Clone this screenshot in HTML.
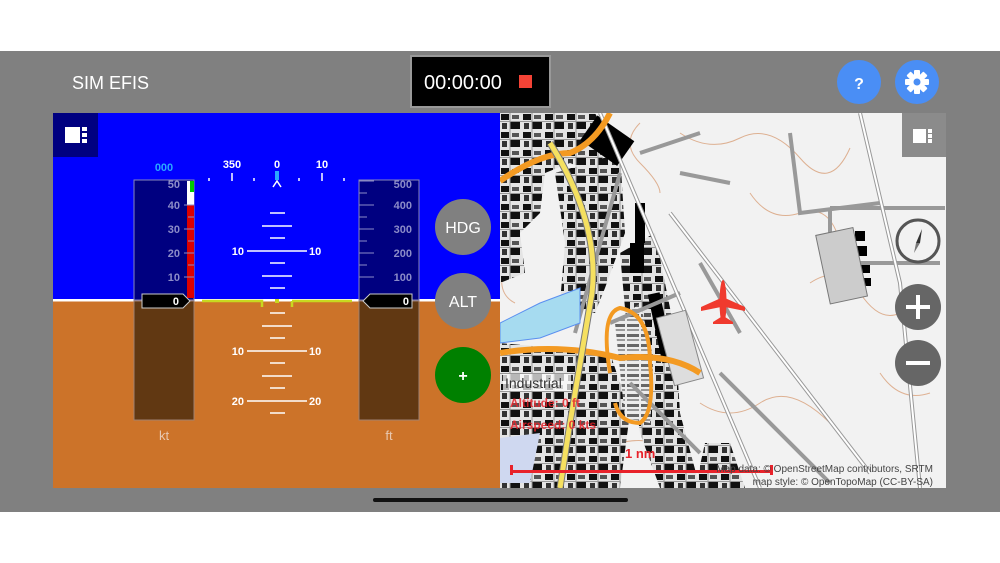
<!DOCTYPE html>
<html><head><meta charset="utf-8"><style>
html,body{margin:0;padding:0;width:1000px;height:563px;overflow:hidden;background:#fff;font-family:"Liberation Sans",sans-serif}
</style></head><body>
<svg width="1000" height="563" xmlns="http://www.w3.org/2000/svg" font-family="Liberation Sans, sans-serif">
<defs>
<pattern id="city" width="22" height="18" patternUnits="userSpaceOnUse">
<rect width="22" height="18" fill="#e4e4e4"/>
<rect x="1" y="1" width="8" height="6" fill="#111"/><rect x="12" y="2" width="7" height="4" fill="#555"/>
<rect x="2" y="10" width="5" height="6" fill="#333"/><rect x="10" y="9" width="10" height="7" fill="#111"/>
<path d="M0 8.5 H22 M10 0 V18" stroke="#999" stroke-width="1"/>
</pattern>
<pattern id="park" width="14" height="10" patternUnits="userSpaceOnUse">
<rect width="14" height="10" fill="#ececec"/><rect x="1" y="1" width="12" height="3" fill="#666"/><rect x="1" y="6" width="12" height="2" fill="#999"/>
</pattern>
</defs>
<rect x="0" y="51" width="1000" height="461" fill="#808080"/>
<text x="72" y="89" font-size="18" fill="#fff">SIM EFIS</text>
<rect x="411" y="56" width="139" height="51" fill="#000" stroke="#999" stroke-width="2"/>
<text x="424" y="89" font-size="20" fill="#fff">00:00:00</text>
<rect x="519" y="75" width="13" height="13" fill="#f44336"/>
<circle cx="859" cy="82" r="22" fill="#4a8ef5"/>
<text x="859" y="89" font-size="16" font-weight="bold" fill="#fff" text-anchor="middle">?</text>
<circle cx="917" cy="82" r="22" fill="#4a8ef5"/>
<g transform="translate(917,82)" fill="#fff">
<circle r="8"/>
<g><rect x="-3" y="-12" width="6" height="24" rx="1"/><rect x="-3" y="-12" width="6" height="24" rx="1" transform="rotate(45)"/><rect x="-3" y="-12" width="6" height="24" rx="1" transform="rotate(90)"/><rect x="-3" y="-12" width="6" height="24" rx="1" transform="rotate(135)"/></g>
<circle r="3.5" fill="#4a8ef5"/>
</g>
<!-- EFIS -->
<rect x="53" y="113" width="447" height="188" fill="#0000ff"/>
<rect x="53" y="300" width="447" height="188" fill="#cc7329"/>
<rect x="53" y="299" width="447" height="2.5" fill="#fff"/>
<rect x="53" y="113" width="45" height="44" fill="#000080"/>
<rect x="65" y="127" width="15" height="16" fill="#fff"/><rect x="82" y="127" width="5" height="4" fill="#fff"/><rect x="82" y="133" width="5" height="4" fill="#fff"/><rect x="82" y="139" width="5" height="4" fill="#fff"/>
<text x="164" y="171" font-size="11" font-weight="bold" fill="#2aa8ff" text-anchor="middle">000</text>
<g fill="#fff" font-size="11" font-weight="bold" text-anchor="middle">
<text x="232" y="168">350</text><text x="277" y="168">0</text><text x="322" y="168">10</text>
</g>
<g stroke="#fff" stroke-width="1.5">
<line x1="209" y1="178" x2="209" y2="181"/><line x1="232" y1="173" x2="232" y2="181"/><line x1="254" y1="178" x2="254" y2="181"/><line x1="299" y1="178" x2="299" y2="181"/><line x1="322" y1="173" x2="322" y2="181"/><line x1="344" y1="178" x2="344" y2="181"/>
<polyline points="273,187 277,181 281,187" fill="none"/>
</g>
<rect x="275" y="171" width="4" height="9" fill="#2aa8ff"/>
<rect x="134" y="180" width="60" height="120" fill="#000080" stroke="#8888bb" stroke-width="1"/>
<rect x="134" y="301" width="60" height="119" fill="#613812" stroke="#a08070" stroke-width="1"/>
<rect x="187" y="181" width="7" height="24" fill="#fff"/>
<rect x="190" y="181" width="4" height="11" fill="#0c0"/>
<rect x="187" y="205" width="7" height="93" fill="#d00"/>
<g fill="#8c8cc8" font-size="11" font-weight="bold" text-anchor="end">
<text x="180" y="188">50</text><text x="180" y="209">40</text><text x="180" y="233">30</text><text x="180" y="257">20</text><text x="180" y="281">10</text></g>
<g stroke="#8c8cc8" stroke-width="1"><line x1="184" y1="205" x2="194" y2="205"/><line x1="184" y1="229" x2="194" y2="229"/><line x1="184" y1="253" x2="194" y2="253"/><line x1="184" y1="277" x2="194" y2="277"/><line x1="188" y1="217" x2="194" y2="217"/><line x1="188" y1="241" x2="194" y2="241"/><line x1="188" y1="265" x2="194" y2="265"/></g>
<polygon points="142,294 183,294 190,301 183,308 142,308" fill="#000" stroke="#ccc" stroke-width="1"/>
<text x="179" y="305" font-size="11" font-weight="bold" fill="#fff" text-anchor="end">0</text>
<text x="164" y="440" font-size="13" fill="#e8c8b0" text-anchor="middle">kt</text>
<rect x="359" y="180" width="60" height="120" fill="#000080" stroke="#8888bb" stroke-width="1"/>
<rect x="359" y="301" width="60" height="119" fill="#613812" stroke="#a08070" stroke-width="1"/>
<g fill="#8c8cc8" font-size="11" font-weight="bold" text-anchor="end">
<text x="412" y="188">500</text><text x="412" y="209">400</text><text x="412" y="233">300</text><text x="412" y="257">200</text><text x="412" y="281">100</text></g>
<g stroke="#8c8cc8" stroke-width="1"><line x1="359" y1="205" x2="374" y2="205"/><line x1="359" y1="229" x2="374" y2="229"/><line x1="359" y1="253" x2="374" y2="253"/><line x1="359" y1="277" x2="374" y2="277"/><line x1="359" y1="193" x2="367" y2="193"/><line x1="359" y1="217" x2="367" y2="217"/><line x1="359" y1="241" x2="367" y2="241"/><line x1="359" y1="265" x2="367" y2="265"/><line x1="359" y1="181" x2="374" y2="181"/></g>
<polygon points="363,301 370,294 412,294 412,308 370,308" fill="#000" stroke="#ccc" stroke-width="1"/>
<text x="409" y="305" font-size="11" font-weight="bold" fill="#fff" text-anchor="end">0</text>
<text x="389" y="440" font-size="13" fill="#e8c8b0" text-anchor="middle">ft</text>
<g stroke="#fff" stroke-width="1.5">
<line x1="270" y1="213" x2="285" y2="213"/><line x1="262" y1="226" x2="292" y2="226"/><line x1="270" y1="238" x2="285" y2="238"/><line x1="247" y1="251" x2="307" y2="251"/><line x1="270" y1="263" x2="285" y2="263"/><line x1="262" y1="276" x2="292" y2="276"/><line x1="270" y1="288" x2="285" y2="288"/>
<line x1="270" y1="313" x2="285" y2="313"/><line x1="262" y1="326" x2="292" y2="326"/><line x1="270" y1="338" x2="285" y2="338"/><line x1="247" y1="351" x2="307" y2="351"/><line x1="270" y1="363" x2="285" y2="363"/><line x1="262" y1="376" x2="292" y2="376"/><line x1="270" y1="388" x2="285" y2="388"/><line x1="247" y1="401" x2="307" y2="401"/><line x1="270" y1="413" x2="285" y2="413"/>
</g>
<g fill="#fff" font-size="11" font-weight="bold">
<text x="244" y="255" text-anchor="end">10</text><text x="309" y="255">10</text>
<text x="244" y="355" text-anchor="end">10</text><text x="309" y="355">10</text>
<text x="244" y="405" text-anchor="end">20</text><text x="309" y="405">20</text>
</g>
<g stroke="#c8d820" stroke-width="2.5" fill="none">
<polyline points="202,301 262,301 262,307"/><polyline points="292,301 352,301"/><polyline points="292,301 292,307"/>
</g>
<rect x="275" y="299" width="4" height="4" fill="#c8d820"/>
<circle cx="463" cy="227" r="28" fill="#808080"/><text x="463" y="233" font-size="16" fill="#fff" text-anchor="middle">HDG</text>
<circle cx="463" cy="301" r="28" fill="#808080"/><text x="463" y="307" font-size="16" fill="#fff" text-anchor="middle">ALT</text>
<circle cx="463" cy="375" r="28" fill="#008000"/><text x="463" y="381" font-size="16" font-weight="bold" fill="#fff" text-anchor="middle">+</text>
<!-- map -->
<svg x="500" y="113" width="446" height="375" viewBox="0 0 446 375">
<rect width="446" height="375" fill="#f2f2f2"/>
<g fill="none" stroke="#d9a07a" stroke-width="1" opacity="0.8">
<path d="M180 20 q30 20 60 5 t60 20 t50 -10"/><path d="M250 80 q20 30 50 20 t40 30"/><path d="M310 170 q30 -20 50 10 t40 20"/><path d="M200 290 q30 20 60 0 t70 20"/><path d="M380 260 q20 30 50 20"/><path d="M120 330 q40 -10 60 20"/><path d="M5 150 q-10 30 10 40"/><path d="M140 10 q-20 20 0 40 t20 30"/>
</g>
<!-- dense city -->
<path d="M0 0 L95 0 L110 30 L95 60 L70 50 L45 60 L40 100 L20 120 L0 120Z" fill="url(#city)"/>
<path d="M55 60 L120 40 L125 120 L105 175 L95 200 L60 190 L65 130Z" fill="url(#city)"/>
<path d="M0 120 L20 120 L25 160 L0 170Z" fill="url(#city)"/>
<path d="M0 230 L110 240 L130 300 L120 375 L0 375Z" fill="url(#city)"/>
<path d="M120 140 L155 120 L175 220 L180 300 L200 375 L160 375 L140 320 L130 250Z" fill="url(#city)"/>
<path d="M115 210 L140 190 L155 250 L150 310 L125 305 Z" fill="url(#park)"/>
<path d="M195 375 L205 330 L230 330 L245 375Z" fill="url(#city)"/>
<g fill="#000">
<rect x="85" y="8" width="45" height="30" transform="rotate(35 100 25)"/>
<rect x="135" y="90" width="10" height="40"/><rect x="130" y="130" width="14" height="30"/><rect x="155" y="180" width="12" height="70" transform="rotate(-12 160 215)"/>
<rect x="355" y="118" width="10" height="10"/><rect x="357" y="133" width="10" height="10"/><rect x="360" y="150" width="10" height="10"/><rect x="362" y="165" width="9" height="8"/>
</g>
<g fill="none" stroke="#999" stroke-width="4">
<path d="M100 0 L260 375"/><path d="M170 100 L370 360"/><path d="M120 60 L75 220"/><path d="M220 260 L330 370"/><path d="M130 270 L200 340"/>
<path d="M330 95 L445 95 M330 95 L330 150 L440 150"/><path d="M360 0 L400 170 L420 375"/><path d="M200 150 L240 220"/><path d="M140 40 L200 20 M180 60 L230 70"/><path d="M110 210 L180 180"/><path d="M290 20 L300 100 L380 90"/>
</g>
<g fill="none" stroke="#fff" stroke-width="2">
<path d="M100 0 L260 375"/><path d="M170 100 L370 360"/><path d="M360 0 L400 170 L420 375"/>
</g>
<rect x="322" y="118" width="38" height="70" fill="#ccc" stroke="#777" transform="rotate(-12 340 150)"/>
<rect x="165" y="200" width="30" height="70" fill="#ddd" stroke="#888" transform="rotate(-15 180 235)"/>
<path d="M0 68 Q40 40 70 40 Q95 30 110 0" stroke="#f39a22" stroke-width="6" fill="none"/>
<path d="M0 240 Q60 230 120 245 Q170 240 200 260" stroke="#f39a22" stroke-width="6" fill="none"/>
<path d="M110 260 Q100 200 120 195 Q150 200 150 250 Q155 300 140 310 Q120 310 115 290" stroke="#f39a22" stroke-width="4" fill="none"/>
<path d="M50 30 Q100 110 92 180 Q80 250 70 310 L60 375" stroke="#777" stroke-width="7" fill="none"/>
<path d="M50 30 Q100 110 92 180 Q80 250 70 310 L60 375" stroke="#f5e060" stroke-width="5" fill="none"/>
<path d="M0 210 L40 190 L80 175 L80 210 L40 225 L0 230Z" fill="#a6dbf0" stroke="#5a8ff0"/>
<path d="M0 325 L40 320 L30 370 L0 370Z" fill="#cfd8f0"/>
<rect x="3" y="261" width="68" height="17" fill="#fff" opacity="0.7"/>
<text x="5" y="275" font-size="14" fill="#333">Industrial</text>
<text x="10" y="294" font-size="12" fill="#e8222a" font-weight="bold" opacity="0.85">Altitude: 0 ft</text>
<text x="10" y="316" font-size="12" fill="#e8222a" font-weight="bold" opacity="0.85">Airspeed: 0 kts</text>
<text x="125" y="345" font-size="13" fill="#e8222a" font-weight="bold">1 nm</text>
<rect x="10" y="357" width="263" height="3" fill="#e8222a"/>
<rect x="10" y="352" width="3" height="10" fill="#e8222a"/><rect x="270" y="352" width="3" height="10" fill="#e8222a"/>
<text x="433" y="359" font-size="10" fill="#444" text-anchor="end">Map data: © OpenStreetMap contributors, SRTM</text>
<text x="433" y="372" font-size="10" fill="#444" text-anchor="end">map style: © OpenTopoMap (CC-BY-SA)</text>
<g transform="translate(223,189)" fill="#f03a2e">
<ellipse cx="0" cy="0" rx="3.5" ry="22"/>
<polygon points="-2,-4 -22,5 -22,9 -2,5 2,5 22,9 22,5 2,-4"/>
<polygon points="-2,15 -10,20 -10,22 10,22 10,20 2,15"/>
</g>
<rect x="402" y="0" width="44" height="44" fill="#808080" opacity="0.9"/>
<rect x="413" y="16" width="13" height="14" fill="#fff"/><rect x="428" y="16" width="4" height="4" fill="#fff"/><rect x="428" y="21" width="4" height="4" fill="#fff"/><rect x="428" y="26" width="4" height="4" fill="#fff"/>
<circle cx="418" cy="128" r="21" fill="none" stroke="#555" stroke-width="3"/>
<polygon points="422,116 416,130 420,130" fill="#333"/><polygon points="420,130 416,130 414,140" fill="#777"/>
<circle cx="418" cy="194" r="23" fill="#666"/><rect x="406" y="192" width="24" height="4" fill="#fff"/><rect x="416" y="182" width="4" height="24" fill="#fff"/>
<circle cx="418" cy="250" r="23" fill="#666"/><rect x="406" y="248" width="24" height="4" fill="#fff"/>
</svg>
<rect x="373" y="498" width="255" height="4" rx="2" fill="#111"/>
</svg>
</body></html>
